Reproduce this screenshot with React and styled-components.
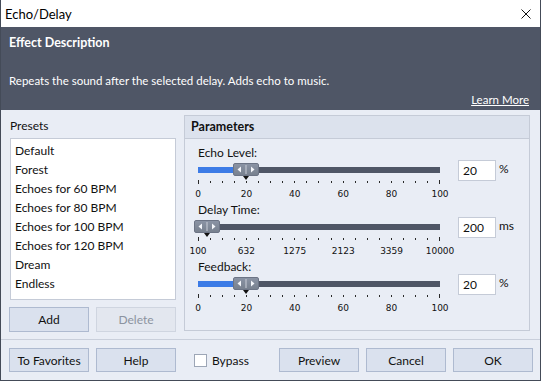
import styled, { createGlobalStyle } from 'styled-components';

const GlobalStyle = createGlobalStyle`
  body {
    margin: 0;
    background: #3b414d;
    font-family: Lato, "Noto Sans", sans-serif;
    font-size: 11.5px;
    color: #111;
  }
`;

const Window = styled.div`
  width: 541px;
  height: 381px;
  box-sizing: border-box;
  border: 1px solid #444b58;
  border-top: 0;
  display: flex;
  flex-direction: column;
  background: #e9edf5;
  overflow: hidden;
`;

const TitleBar = styled.div`
  height: 27px;
  flex: none;
  background: #fff;
  display: flex;
  align-items: center;
  justify-content: space-between;
  padding: 0 9px 0 4px;
  font-size: 13px;
  color: #000;
`;

const Description = styled.div`
  height: 83px;
  flex: none;
  box-sizing: border-box;
  background: #4f5666;
  color: #fff;
  padding: 8px 11px 0 8px;
  display: flex;
  flex-direction: column;
  line-height: 16px;
`;

const DescTitle = styled.div`
  font-weight: bold;
  font-size: 12.5px;
`;

const DescText = styled.div`
  margin-top: 22px;
`;

const LearnMore = styled.a`
  margin-top: 3px;
  align-self: flex-end;
  color: #fff;
  text-decoration: underline;
`;

const Main = styled.div`
  height: 229px;
  flex: none;
  display: flex;
  gap: 8px;
  padding-left: 8px;
`;

const Column = styled.div`
  width: 167px;
  padding-top: 8px;
  display: flex;
  flex-direction: column;
`;

const Caption = styled.div`
  line-height: 16px;
  padding-left: 1px;
  margin-bottom: 4px;
  font-size: 12px;
`;

const List = styled.ul`
  list-style: none;
  margin: 0 0 0 1px;
  padding: 2px 0 0 4px;
  height: 162px;
  box-sizing: border-box;
  background: #fff;
  border: 1px solid #c5cbd7;
  font-size: 12px;
`;

const Item = styled.li`
  line-height: 19px;
`;

const Row = styled.div`
  display: flex;
  gap: 7px;
  margin-top: 7px;
`;

const Button = styled.button`
  width: 80px;
  height: ${p => p.$h || 25}px;
  box-sizing: border-box;
  font: inherit;
  font-size: 12px;
  color: ${p => (p.disabled ? '#8c93a0' : '#111')};
  background: ${p => (p.disabled ? '#e3e7ef' : '#dae1ee')};
  border: 1px solid ${p => (p.disabled ? '#cfd5e0' : '#aebad0')};
  padding: 0;
`;

const Panel = styled.div`
  margin-top: 5px;
  width: 346px;
  height: 216px;
  box-sizing: border-box;
  border: 1px solid #c5cbd7;
  display: flex;
  flex-direction: column;
`;

const PanelHeader = styled.div`
  height: 23px;
  box-sizing: border-box;
  background: #dce2ed;
  border-bottom: 1px solid #c5cbd7;
  font-weight: bold;
  font-size: 12.5px;
  padding-left: 6px;
  line-height: 22px;
`;

const PanelBody = styled.div`
  padding: 6px 0 0 13px;
  display: flex;
  flex-direction: column;
  gap: 1px;
`;

const Group = styled.div`
  height: 56px;
  display: flex;
  flex-direction: column;
`;

const GroupLabel = styled.div`
  line-height: 16px;
  font-size: 12px;
`;

const SliderRow = styled.div`
  display: grid;
  grid-template-columns: 242px 38px auto;
  column-gap: 18px;
`;

const Scale = styled.div`
  display: flex;
  flex-direction: column;
`;

const TrackArea = styled.div`
  position: relative;
  height: 18px;
`;

const Track = styled.div`
  position: relative;
  top: 6px;
  height: 6px;
  background: #4f5666;
  overflow: hidden;
`;

const Fill = styled.div`
  height: 100%;
  background: #3c7be6;
`;

const Thumb = styled.div`
  position: absolute;
  top: 2px;
  width: 26px;
  height: 13px;
  margin-left: -13px;
  box-sizing: border-box;
  border: 1px solid #6c7485;
  border-radius: 2px;
  background: linear-gradient(#8a93a4, #78818f);
  display: flex;
  align-items: center;
  justify-content: center;
`;

const Pointer = styled.div`
  position: absolute;
  top: 15px;
  margin-left: -3px;
  width: 0;
  height: 0;
  border-left: 3.5px solid transparent;
  border-right: 3.5px solid transparent;
  border-top: 4px solid #111;
`;

const Ticks = styled.div`
  height: 6px;
  display: flex;
  justify-content: space-between;
  align-items: flex-start;
  margin-top: 1px;
`;

const Tick = styled.span`
  width: 1px;
  height: ${p => (p.$major ? 4 : 2)}px;
  margin-top: ${p => (p.$major ? 0 : 1)}px;
  background: #2a2a2a;
`;

const TickLabels = styled.div`
  position: relative;
  height: 16px;
  font-family: "DejaVu Sans", sans-serif;
  font-size: 9px;
  line-height: 16px;
  color: #111;
`;

const TickLabel = styled.span`
  position: absolute;
  top: 0;
  transform: translateX(-50%);
`;

const Input = styled.div`
  height: 21px;
  margin-top: -1px;
  box-sizing: border-box;
  background: #fff;
  border: 1px solid #c5cbd7;
  padding-left: 4px;
  line-height: 19px;
  font-size: 12px;
`;

const Unit = styled.div`
  margin-left: -15px;
  line-height: 16px;
  font-size: 12px;
`;

const Footer = styled.div`
  flex: 1;
  border-top: 1px solid #c9cfdb;
  display: flex;
  align-items: flex-start;
  gap: 7px;
  padding: 8px 7px 0 8px;
`;

const Bypass = styled.label`
  display: flex;
  align-items: center;
  gap: 5px;
  height: 24px;
  margin-left: 11px;
  font-size: 12px;
`;

const Check = styled.span`
  width: 13px;
  height: 13px;
  box-sizing: border-box;
  background: #fff;
  border: 1px solid #9da6b6;
`;

const Spacer = styled.div`
  flex: 1;
`;

const presets = ['Default', 'Forest', 'Echoes for 60 BPM', 'Echoes for 80 BPM', 'Echoes for 100 BPM', 'Echoes for 120 BPM', 'Dream', 'Endless'];

const percentLabels = ['0', '20', '40', '60', '80', '100'];

const sliders = [
    { label: 'Echo Level:', value: '20', unit: '%', pos: 0.2, labels: percentLabels },
    { label: 'Delay Time:', value: '200', unit: 'ms', pos: 0.037, labels: ['100', '632', '1275', '2123', '3359', '10000'] },
    { label: 'Feedback:', value: '20', unit: '%', pos: 0.2, labels: percentLabels },
];

const ThumbGrip = () => (
    <svg width="20" height="9" viewBox="0 0 20 9">
        <path d="M5 1.5 L1.5 4.5 L5 7.5 Z" fill="#f4f6fa" />
        <rect x="9.5" y="0" width="1" height="9" fill="#c9ced8" />
        <path d="M15 1.5 L18.5 4.5 L15 7.5 Z" fill="#f4f6fa" />
    </svg>
);

const Slider = ({ label, value, unit, pos, labels }) => (
    <Group>
        <GroupLabel>{label}</GroupLabel>
        <SliderRow>
            <Scale>
                <TrackArea>
                    <Track><Fill style={{ width: `${pos * 100}%` }} /></Track>
                    <Pointer style={{ left: `${pos * 100}%` }} />
                    <Thumb style={{ left: `${pos * 100}%` }}><ThumbGrip /></Thumb>
                </TrackArea>
                <Ticks>
                    {Array.from({ length: 21 }, (_, i) => <Tick key={i} $major={i === 0 || i === 20} />)}
                </Ticks>
                <TickLabels>
                    {labels.map((text, i) => (
                        <TickLabel key={text} style={{ left: `${i * 20}%` }}>{text}</TickLabel>
                    ))}
                </TickLabels>
            </Scale>
            <Input>{value}</Input>
            <Unit>{unit}</Unit>
        </SliderRow>
    </Group>
);

const App = () => (
    <>
        <GlobalStyle />
        <Window>
            <TitleBar>
                <span>Echo/Delay</span>
                <svg width="10" height="10" viewBox="0 0 10 10">
                    <path d="M0.5 0.5 L9.5 9.5 M9.5 0.5 L0.5 9.5" stroke="#111" strokeWidth="1" />
                </svg>
            </TitleBar>
            <Description>
                <DescTitle>Effect Description</DescTitle>
                <DescText>Repeats the sound after the selected delay. Adds echo to music.</DescText>
                <LearnMore>Learn More</LearnMore>
            </Description>
            <Main>
                <Column>
                    <Caption>Presets</Caption>
                    <List>
                        {presets.map(name => <Item key={name}>{name}</Item>)}
                    </List>
                    <Row>
                        <Button>Add</Button>
                        <Button disabled>Delete</Button>
                    </Row>
                </Column>
                <Panel>
                    <PanelHeader>Parameters</PanelHeader>
                    <PanelBody>
                        {sliders.map(s => <Slider key={s.label} {...s} />)}
                    </PanelBody>
                </Panel>
            </Main>
            <Footer>
                <Button $h={24}>To Favorites</Button>
                <Button $h={24}>Help</Button>
                <Bypass><Check />Bypass</Bypass>
                <Spacer />
                <Button $h={24}>Preview</Button>
                <Button $h={24}>Cancel</Button>
                <Button $h={24}>OK</Button>
            </Footer>
        </Window>
    </>
);

export default App;
